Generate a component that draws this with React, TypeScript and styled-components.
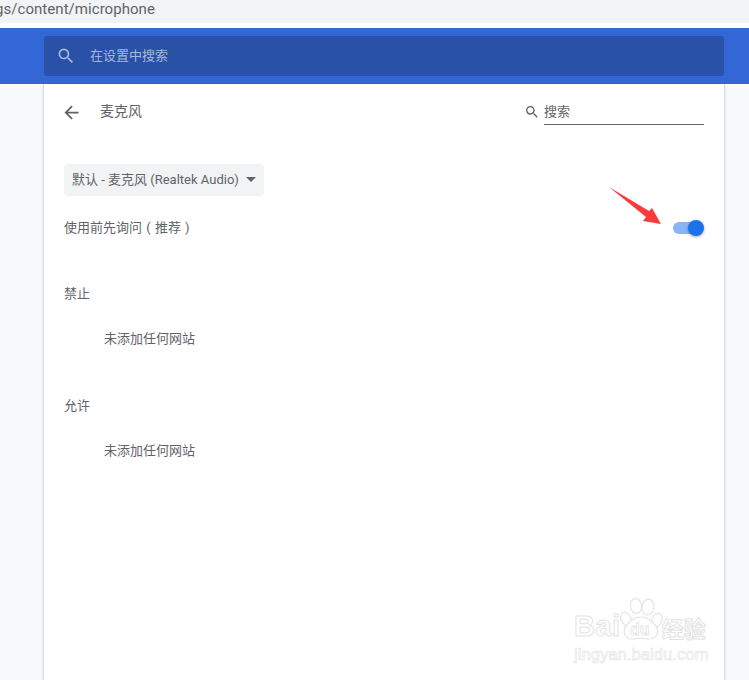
import React from "react";
import styled, { createGlobalStyle } from "styled-components";

const FONT = `"Roboto", "Liberation Sans", "Noto Sans CJK SC", sans-serif`;

const Global = createGlobalStyle`
  html, body { margin: 0; padding: 0; background: #fff; overflow: hidden; }
  * { box-sizing: border-box; }
  #root { height: 680px; }
`;

const Page = styled.div`
  position: relative;
  width: 749px;
  height: 680px;
  overflow: hidden;
  display: flex;
  flex-direction: column;
  font-family: ${FONT};
  background: #f8f9fa;
`;

const AddressBar = styled.div`
  height: 23px;
  flex: none;
  background: #f1f3f4;
  color: #5f6368;
  font-size: 15px;
  line-height: 18px;
  white-space: nowrap;
  overflow: hidden;
  margin-bottom: 5px;
  box-shadow: 0 5px 0 #fff;
`;

const Clipped = styled.span`
  display: inline-block;
  margin-left: -5px;
  letter-spacing: 0.05px;
`;

const Header = styled.header`
  height: 56px;
  flex: none;
  background: #3367d6;
  padding: 8px 25px 8px 44px;
`;

const SearchField = styled.div`
  height: 40px;
  background: #2a51a8;
  border-radius: 2px;
  display: flex;
  align-items: center;
  padding-left: 12px;
  gap: 14px;
  color: #a5b7dd;
  font-size: 13px;
`;

const RaisedText = styled.span`
  margin-bottom: 3px;
`;

const Card = styled.main`
  flex: 1;
  width: 680px;
  margin-left: 44px;
  background: #fff;
  box-shadow: 0 0 2px rgba(60, 64, 67, 0.35), 0 1px 3px rgba(60, 64, 67, 0.15);
  padding: 0 20px;
  color: #5f6368;
  font-size: 13px;
`;

const TitleRow = styled.div`
  height: 56px;
  display: flex;
  align-items: center;
`;

const Title = styled.h1`
  margin: 0 0 4px 18px;
  font-size: 14px;
  font-weight: 400;
  color: #5f6368;
  flex: 1;
`;

const IconButton = styled.span`
  display: flex;
  width: 21px;
  height: 21px;
  margin-left: -3px;
`;

const LocalSearch = styled.div`
  display: flex;
  align-items: center;
  gap: 4px;
`;

const LocalInput = styled.div`
  width: 160px;
  height: 25px;
  line-height: 24px;
  border-bottom: 1px solid #5f6368;
  font-size: 13px;
  color: #5f6368;
  margin-top: 1px;
`;

const Select = styled.div`
  margin-top: 24px;
  width: 200px;
  height: 32px;
  border-radius: 4px;
  background: #f1f3f4;
  padding: 0 0 3px 8px;
  display: flex;
  align-items: center;
  font-size: 13px;
  color: #5f6368;
  white-space: nowrap;
`;

const Caret = styled.span`
  margin-left: 7px;
  width: 0;
  height: 0;
  border-left: 5px solid transparent;
  border-right: 5px solid transparent;
  border-top: 5px solid #5f6368;
  margin-top: 2px;
`;

const ToggleRow = styled.div`
  height: 32px;
  margin-top: 15px;
  display: flex;
  align-items: center;
  justify-content: space-between;
`;

const ToggleLabel = styled.span`
  margin-bottom: 2px;
  word-spacing: 1px;
`;

const Track = styled.span`
  position: relative;
  display: block;
  width: 30px;
  height: 12px;
  margin-top: 1px;
  margin-right: 1px;
  border-radius: 6px;
  background: #8ab4f8;
`;

const Knob = styled.span`
  position: absolute;
  right: -1px;
  top: -2px;
  width: 16px;
  height: 16px;
  border-radius: 50%;
  background: #1a73e8;
  box-shadow: 0 1px 3px rgba(0, 0, 0, 0.35);
`;

const SectionLabel = styled.div<{ $top: number }>`
  margin-top: ${(p) => p.$top}px;
  height: 20px;
  line-height: 20px;
`;

const Empty = styled.div`
  margin-top: 25px;
  padding-left: 40px;
  height: 20px;
  line-height: 20px;
`;

const Arrow = styled.svg`
  position: absolute;
  left: 600px;
  top: 180px;
  width: 70px;
  height: 50px;
`;

const Watermark = styled.div`
  position: absolute;
  left: 574px;
  top: 598px;
  width: 140px;
  height: 66px;
  color: #fff;
  -webkit-text-stroke: 1px #e4e4e4;
  user-select: none;
`;

const WmLogoRow = styled.div`
  display: flex;
  align-items: flex-end;
  height: 44px;
`;

const WmBai = styled.span`
  font-family: "Liberation Sans", sans-serif;
  font-size: 29px;
  font-weight: 700;
  line-height: 32px;
  letter-spacing: 0.5px;
`;

const WmPaw = styled.svg`
  width: 46px;
  height: 44px;
  flex: none;
  margin-left: -3px;
`;

const WmCjk = styled.span`
  font-family: "Noto Sans CJK SC", sans-serif;
  font-size: 22px;
  font-weight: 700;
  line-height: 30px;
  margin-left: -2px;
  white-space: nowrap;
`;

const WmUrl = styled.div`
  font-family: "Liberation Sans", sans-serif;
  font-size: 16.7px;
  line-height: 18px;
  margin-top: 4px;
  -webkit-text-stroke: 0.6px #e4e4e4;
  white-space: nowrap;
`;

const SearchGlyph = ({ size, color }: { size: number; color: string }) => (
  <svg width={size} height={size} viewBox="0 0 24 24" fill={color}>
    <path d="M15.5 14h-.79l-.28-.27A6.47 6.47 0 0 0 16 9.5 6.5 6.5 0 1 0 9.5 16c1.61 0 3.09-.59 4.23-1.57l.27.28v.79l5 4.99L20.49 19l-4.99-5zm-6 0C7.01 14 5 11.99 5 9.5S7.01 5 9.5 5 14 7.01 14 9.5 11.99 14 9.5 14z" />
  </svg>
);

export default function App() {
  return (
    <Page>
      <Global />
      <AddressBar>
        <Clipped>gs/content/microphone</Clipped>
      </AddressBar>
      <Header>
        <SearchField>
          <SearchGlyph size={20} color="#a5b7dd" />
          <RaisedText>在设置中搜索</RaisedText>
        </SearchField>
      </Header>
      <Card>
        <TitleRow>
          <IconButton>
            <svg width="21" height="21" viewBox="0 0 24 24" fill="#5f6368">
              <path d="M20 11H7.83l5.59-5.59L12 4l-8 8 8 8 1.41-1.41L7.83 13H20v-2z" />
            </svg>
          </IconButton>
          <Title>麦克风</Title>
          <LocalSearch>
            <SearchGlyph size={16} color="#5f6368" />
            <LocalInput>搜索</LocalInput>
          </LocalSearch>
        </TitleRow>
        <Select>
          默认 - 麦克风 (Realtek Audio)
          <Caret />
        </Select>
        <ToggleRow>
          <ToggleLabel>使用前先询问 ( 推荐 )</ToggleLabel>
          <Track>
            <Knob />
          </Track>
        </ToggleRow>
        <SectionLabel $top={41}>禁止</SectionLabel>
        <Empty>未添加任何网站</Empty>
        <SectionLabel $top={47}>允许</SectionLabel>
        <Empty>未添加任何网站</Empty>
      </Card>
      <Arrow viewBox="600 180 70 50">
        <polygon points="609,187 649,211 652,208 661,224 643,221 646,217" fill="#fb3a3a" />
      </Arrow>
      <Watermark>
        <WmLogoRow>
          <WmBai>Bai</WmBai>
          <WmPaw viewBox="0 0 46 44" fill="#fff" stroke="#e4e4e4" strokeWidth="1.2">
            <ellipse cx="8" cy="21" rx="5" ry="7" transform="rotate(-25 8 21)" />
            <ellipse cx="18" cy="8" rx="5.5" ry="7.5" transform="rotate(-8 18 8)" />
            <ellipse cx="30" cy="9" rx="6" ry="8" transform="rotate(8 30 9)" />
            <ellipse cx="39" cy="22" rx="5" ry="7" transform="rotate(25 39 22)" />
            <path d="M23 19c7 0 10 4 14 8 5 5 3 14-6 14-3 0-5-1-8-1s-5 1-9 1c-8 0-10-9-5-14 4-4 7-8 14-8z" />
            <text x="12" y="37" fontFamily="Liberation Sans, sans-serif" fontSize="16" fontWeight="700" strokeWidth="0.8">du</text>
          </WmPaw>
          <WmCjk>经验</WmCjk>
        </WmLogoRow>
        <WmUrl>jingyan.baidu.com</WmUrl>
      </Watermark>
    </Page>
  );
}
